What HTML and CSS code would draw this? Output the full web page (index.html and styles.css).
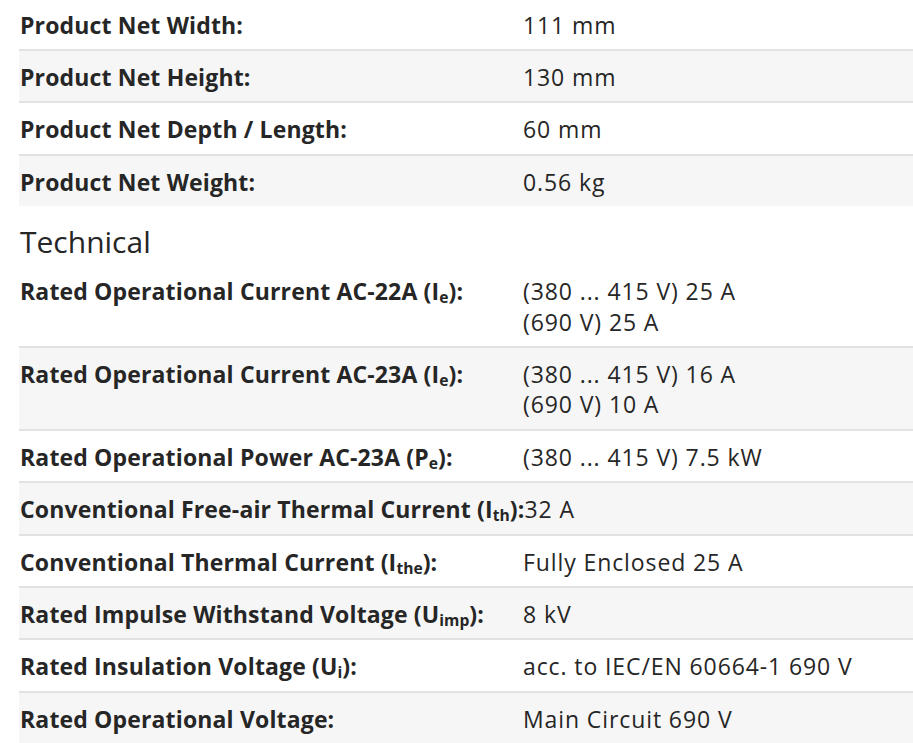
FILE: index.html
```html
<!DOCTYPE html>
<html lang="en">
<head>
<meta charset="utf-8">
<title>Specifications</title>
<link rel="stylesheet" href="styles.css">
</head>
<body>
<main class="specs">
  <dl class="spec-list spec-list--first">
    <div class="spec-row"><dt class="spec-label">Product Net Width:</dt><dd class="spec-value">111 mm</dd></div>
    <div class="spec-row"><dt class="spec-label">Product Net Height:</dt><dd class="spec-value">130 mm</dd></div>
    <div class="spec-row"><dt class="spec-label">Product Net Depth / Length:</dt><dd class="spec-value">60 mm</dd></div>
    <div class="spec-row"><dt class="spec-label">Product Net Weight:</dt><dd class="spec-value">0.56 kg</dd></div>
  </dl>
  <h2 class="group-title">Technical</h2>
  <dl class="spec-list">
    <div class="spec-row"><dt class="spec-label">Rated Operational Current AC-22A (I<sub>e</sub>):</dt><dd class="spec-value">(380 ... 415 V) 25 A<br>(690 V) 25 A</dd></div>
    <div class="spec-row"><dt class="spec-label">Rated Operational Current AC-23A (I<sub>e</sub>):</dt><dd class="spec-value">(380 ... 415 V) 16 A<br>(690 V) 10 A</dd></div>
    <div class="spec-row"><dt class="spec-label">Rated Operational Power AC-23A (P<sub>e</sub>):</dt><dd class="spec-value">(380 ... 415 V) 7.5 kW</dd></div>
    <div class="spec-row"><dt class="spec-label">Conventional Free-air Thermal Current (I<sub>th</sub>):</dt><dd class="spec-value">32 A</dd></div>
    <div class="spec-row"><dt class="spec-label">Conventional Thermal Current (I<sub>the</sub>):</dt><dd class="spec-value">Fully Enclosed 25 A</dd></div>
    <div class="spec-row"><dt class="spec-label">Rated Impulse Withstand Voltage (U<sub>imp</sub>):</dt><dd class="spec-value">8 kV</dd></div>
    <div class="spec-row"><dt class="spec-label">Rated Insulation Voltage (U<sub>i</sub>):</dt><dd class="spec-value">acc. to IEC/EN 60664-1 690 V</dd></div>
    <div class="spec-row"><dt class="spec-label">Rated Operational Voltage:</dt><dd class="spec-value">Main Circuit 690 V</dd></div>
  </dl>
</main>
</body>
</html>
```

FILE: styles.css
```css
html, body {
  margin: 0;
  padding: 0;
  background: #ffffff;
}

body {
  font-family: "Open Sans", "Noto Sans", sans-serif;
  color: #262626;
  overflow: hidden;
}

.specs {
  padding: 0 0 0 19px;
}

.spec-list {
  margin: 0;
  padding: 0;
}

.spec-list--first {
  margin-top: -1.5px;
}

.spec-row {
  display: flex;
  align-items: flex-start;
  padding: 11px 0 9px;
  line-height: 30.4px;
  font-size: 23px;
}

.spec-row + .spec-row {
  border-top: 2px solid #e2e2e2;
}

.spec-row:nth-child(even) {
  background: #f6f6f6;
}

.spec-label {
  flex: 0 0 auto;
  min-width: 504px;
  margin: 0;
  padding-left: 1px;
  font-weight: 700;
  letter-spacing: 0.15px;
  box-sizing: border-box;
}

.spec-value {
  margin: 0;
  font-weight: 400;
  letter-spacing: 0.9px;
}

sub {
  font-size: 0.68em;
  line-height: 0;
  letter-spacing: 0;
  vertical-align: -0.22em;
}

.group-title {
  margin: 0;
  padding: 18.5px 0 6.5px 1px;
  font-size: 30px;
  font-weight: 400;
  line-height: 34px;
}
```
